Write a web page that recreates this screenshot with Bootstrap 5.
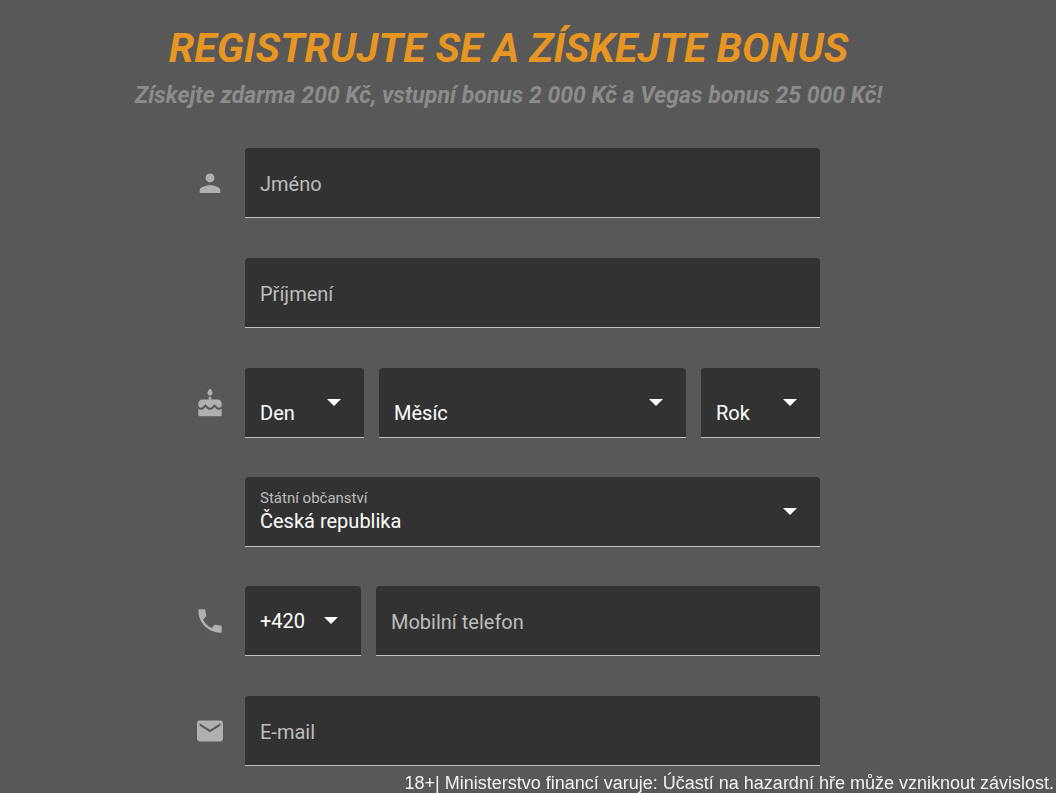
<!DOCTYPE html>
<html lang="cs">
<head>
<meta charset="utf-8">
<meta name="viewport" content="width=device-width, initial-scale=1">
<title>Registrace</title>
<link href="https://cdn.jsdelivr.net/npm/bootstrap@5.3.0/dist/css/bootstrap.min.css" rel="stylesheet">
<style>
body { background: #585858; color: #fff; font-family: Roboto, "Liberation Sans", sans-serif; }
.page { padding: 24px 39px 26px 0; }
.title { font-size: 41px; line-height: 48px; color: #e89623; }
.subtitle { font-size: 23px; line-height: 30px; margin-top: 9px; color: #8c8c8c; }
.signup { max-width: 623px; margin-top: 37px; }
.line { margin-bottom: 40px; }
.line-select { margin-bottom: 39px; }
.line:last-child { margin-bottom: 0; }
.line-icon { width: 26px; margin-right: 22px; }
.line-icon svg { display: block; width: 100%; fill: #b0b0b0; }
.fields { gap: 15px; }
.field.form-control, .field.form-select {
  height: 70px; padding: 2px 15px 0; border: 0; border-bottom: 1px solid #c2c2c2;
  border-radius: 4px 4px 0 0; background-color: #323232; color: #fff;
  font-size: 20px; line-height: 28px;
}
.field.form-control::placeholder { color: #bdbdbd; opacity: 1; }
.field.form-select {
  padding-top: 0;
  background-image: url("data:image/svg+xml,%3csvg xmlns='http://www.w3.org/2000/svg' viewBox='0 0 14 7'%3e%3cpath fill='%23fff' d='M0 0h14L7 7z'/%3e%3c/svg%3e");
  background-size: 14px 7px; background-position: right 23px center;
}
.field.field-low { padding-top: 20px; }
.field.field-labelled { padding-top: 18px; }
.w-day { width: 119px; }
.w-prefix { width: 116px; }
.field-label { top: 11px; left: 15px; font-size: 15px; line-height: 20px; color: #bdbdbd; }
.warning { font-family: "Liberation Sans", sans-serif; font-size: 18px; line-height: 20px; color: #f2f2f2; padding-right: 2px; }
</style>
</head>
<body>
<main class="page">
  <header class="text-center">
    <h1 class="title fw-bold fst-italic mb-0">REGISTRUJTE SE A ZÍSKEJTE BONUS</h1>
    <p class="subtitle fw-bold fst-italic mb-0">Získejte zdarma 200 Kč, vstupní bonus 2 000 Kč a Vegas bonus 25 000 Kč!</p>
  </header>
  <form class="signup mx-auto">
    <div class="line d-flex align-items-center">
      <div class="line-icon flex-shrink-0"><svg viewBox="1 1 22 22" aria-hidden="true"><path d="M12 11.500c2.100 0 3.800-1.600 3.800-3.700S14.100 4 12 4 8.200 5.700 8.200 7.800s1.700 3.700 3.800 3.700zm0 2.300c-2.900 0-8.700 1.300-8.700 4.200v2.500h17.400V18c0-2.900-5.800-4.200-8.700-4.200z"/></svg></div>
      <div class="flex-fill">
        <input class="field form-control" id="first" type="text" placeholder="Jméno" aria-label="Jméno">
      </div>
    </div>
    <div class="line d-flex align-items-center">
      <div class="line-icon flex-shrink-0"></div>
      <div class="flex-fill">
        <input class="field form-control" id="last" type="text" placeholder="Příjmení" aria-label="Příjmení">
      </div>
    </div>
    <div class="line line-select d-flex align-items-center">
      <div class="line-icon flex-shrink-0"><svg viewBox="2 1 20 21" aria-hidden="true"><path d="M12 6c1.110 0 2-.900 2-2 0-.380-.100-.730-.290-1.030L12 0l-1.710 2.970c-.190.300-.290.650-.290 1.030 0 1.100.900 2 2 2zm4.600 9.990-1.070-1.070-1.080 1.070c-1.300 1.300-3.580 1.310-4.890 0l-1.070-1.070-1.090 1.070C6.750 16.640 5.880 17 4.960 17c-.730 0-1.400-.230-1.960-.610V21c0 .550.450 1 1 1h16c.550 0 1-.450 1-1v-4.610c-.560.380-1.230.610-1.960.610-.920 0-1.790-.360-2.440-1.010zM18 9h-5V7h-2v2H6c-1.660 0-3 1.340-3 3v1.540c0 1.080.880 1.960 1.960 1.960.520 0 1.020-.200 1.380-.570l2.140-2.130 2.130 2.130c.740.740 2.030.740 2.770 0l2.140-2.130 2.130 2.130c.370.370.860.570 1.380.570 1.080 0 1.960-.880 1.960-1.960V12C21 10.340 19.660 9 18 9z"/></svg></div>
      <div class="fields d-flex flex-fill">
        <select class="field field-low form-select w-day flex-shrink-0" id="day" aria-label="Den"><option>Den</option></select>
        <select class="field field-low form-select" id="month" aria-label="Měsíc"><option>Měsíc</option></select>
        <select class="field field-low form-select w-day flex-shrink-0" id="year" aria-label="Rok"><option>Rok</option></select>
      </div>
    </div>
    <div class="line line-select d-flex align-items-center">
      <div class="line-icon flex-shrink-0"></div>
      <div class="flex-fill position-relative">
        <label class="field-label position-absolute" for="country">Státní občanství</label>
        <select class="field field-labelled form-select" id="country"><option>Česká republika</option></select>
      </div>
    </div>
    <div class="line d-flex align-items-center">
      <div class="line-icon flex-shrink-0"><svg viewBox="2 2 20 20" aria-hidden="true"><path d="M6.620 10.790c1.440 2.830 3.760 5.140 6.590 6.590l2.200-2.200c.270-.270.670-.360 1.020-.240 1.120.370 2.330.570 3.570.570.550 0 1 .450 1 1V20c0 .550-.450 1-1 1-9.390 0-17-7.610-17-17 0-.550.450-1 1-1h3.500c.550 0 1 .450 1 1 0 1.250.200 2.450.570 3.570.110.350.030.740-.250 1.020l-2.200 2.200z"/></svg></div>
      <div class="fields d-flex flex-fill">
        <select class="field form-select w-prefix flex-shrink-0" id="prefix" aria-label="Předvolba"><option>+420</option></select>
        <input class="field form-control" id="phone" type="tel" placeholder="Mobilní telefon" aria-label="Mobilní telefon">
      </div>
    </div>
    <div class="line d-flex align-items-center">
      <div class="line-icon flex-shrink-0"><svg viewBox="2 2 20 20" aria-hidden="true"><path d="M20 4H4c-1.100 0-1.990.900-1.990 2L2 18c0 1.100.900 2 2 2h16c1.100 0 2-.900 2-2V6c0-1.100-.900-2-2-2zm0 4-8 5-8-5V6l8 5 8-5v2z"/></svg></div>
      <div class="flex-fill">
        <input class="field form-control" id="email" type="email" placeholder="E-mail" aria-label="E-mail">
      </div>
    </div>
  </form>
</main>
<footer class="warning fixed-bottom text-end">18+| Ministerstvo financí varuje: Účastí na hazardní hře může vzniknout závislost.</footer>
<script src="https://cdn.jsdelivr.net/npm/bootstrap@5.3.0/dist/js/bootstrap.bundle.min.js"></script>
</body>
</html>
